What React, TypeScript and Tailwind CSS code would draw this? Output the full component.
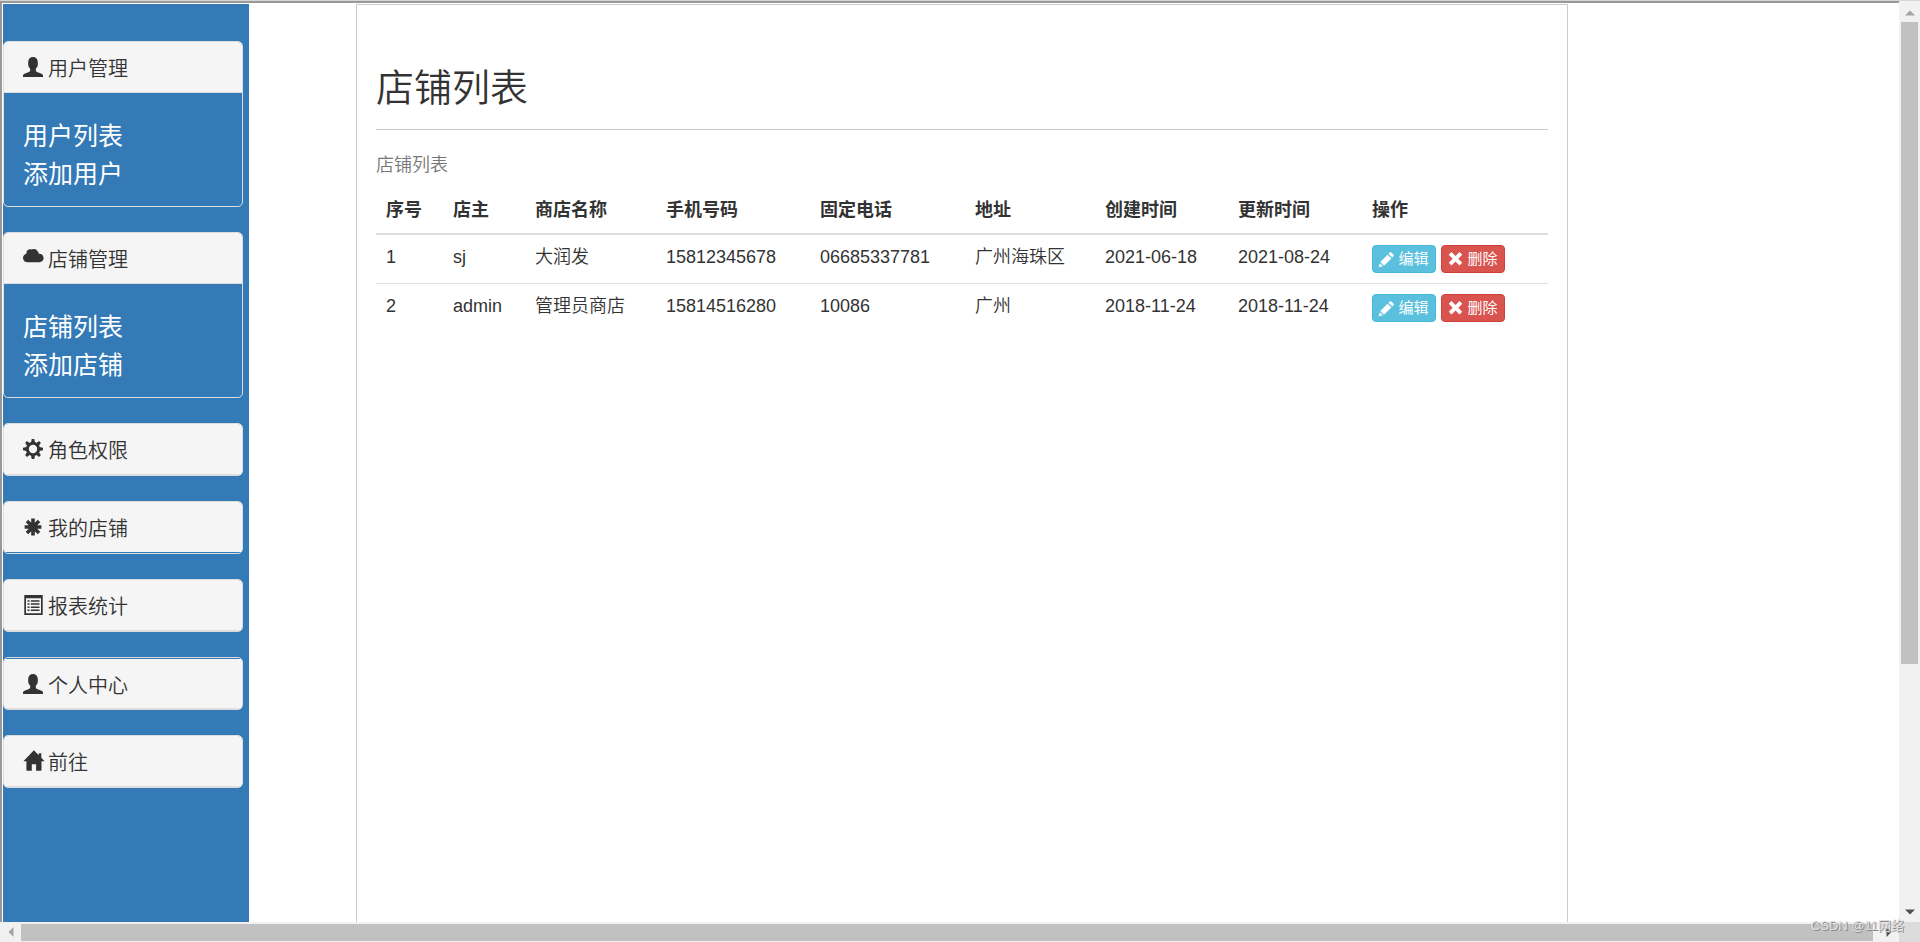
import type { ReactNode } from "react";

type IconName = "user" | "cloud" | "cog" | "asterisk" | "list" | "home" | "pencil" | "remove";

const icons: Record<IconName, ReactNode> = {
  user: (
    <path d="M10 0C7 0 5.2 2 5.2 5v2.5c0 1.800.9 3.200 2 4.200v1.500c0 .9-.5 1.300-1.300 1.700L1.500 16.800C.5 17.300 0 17.800 0 18.700V20h20v-1.300c0-.9-.5-1.400-1.500-1.900l-4.400-1.900c-.8-.4-1.300-.8-1.300-1.700v-1.500c1.100-1 2-2.400 2-4.200V5c0-3-1.800-5-4.800-5z" />
  ),
  cloud: (
    <path d="M4 14.200h12.500c2.200 0 4.100-1.700 4.100-4.100 0-2.300-1.800-4.300-4.200-4.300h-.5C15.300 3 13.400.9 10.800.9c-.9 0-1.700.2-2.300.6C5.700.7 3.500 2.500 3.400 5.200v.6C1.500 6.400 0 8 0 10.100c0 2.300 1.700 4.100 4 4.100z" />
  ),
  cog: (
    <>
      <circle cx="10" cy="10" r="5.700" fill="none" stroke="currentColor" strokeWidth="3" />
      <path d="M8 3.700 8.700 0h2.600l.7 3.700zM8 16.300l.7 3.700h2.600l.7-3.700zM3.700 8 0 8.700v2.600l3.700.7zM16.300 8l3.700.7v2.600l-3.700.7zM4.200 6.800 2.100 4l1.900-1.900 2.800 2.100zM15.800 6.800 17.900 4 16 2.100l-2.800 2.100zM4.200 13.200 2.100 16 4 17.900l2.800-2.100zM15.800 13.200l2.100 2.800-1.900 1.900-2.800-2.100z" />
    </>
  ),
  asterisk: (
    <path
      d="M10 1.600v16.800M1.600 10h16.800M4 4l12 12M16 4 4 16"
      fill="none"
      stroke="currentColor"
      strokeWidth="3.600"
    />
  ),
  list: (
    <>
      <path fillRule="evenodd" d="M1.300 0h18.400v20H1.300zM3 3.300v15h15v-15z" />
      <path d="M4.500 5.200h2v1.500h-2zM7.800 5.200h8.700v1.500H7.800zM4.500 8.300h2v1.500h-2zM7.800 8.300h8.700v1.500H7.800zM4.500 11.400h2v1.500h-2zM7.800 11.400h8.700v1.500H7.800zM4.500 14.500h2V16h-2zM7.800 14.500h8.700V16H7.800z" />
    </>
  ),
  home: (
    <path d="M10.900-.7.4 10.300h3V19c0 .5.300.8.800.8h4.600v-6.500h4.300v6.500h4.600c.5 0 .8-.3.800-.8v-8.700h3.100l-3.300-3.500V2.200h-2.500v2z" />
  ),
  pencil: (
    <path d="M14.300.7c.6-.6 1.600-.6 2.200 0l2.800 2.800c.6.600.6 1.600 0 2.200L17.600 7.400l-5-5zM11.500 3.500l5 5L6.300 18.700l-.4-2.100-2.100-.4-.4-2.200-2.100-.4zM.9 14.900l4.200 4.200L-.3 20.300z" />
  ),
  remove: (
    <path d="M4.700 0 1 3.700 6.300 9 1 14.300 4.700 18l5.300-5.300 5.300 5.300 3.700-3.700L13.700 9 19 3.700 15.300 0 10 5.300z" />
  ),
};

function Icon({ name, className }: { name: IconName; className: string }) {
  return (
    <svg viewBox="0 0 20 20" fill="currentColor" aria-hidden="true" className={`shrink-0 overflow-visible ${className}`}>
      {icons[name]}
    </svg>
  );
}

type Menu = { title: string; icon: IconName; links?: string[]; seam?: "top" | "bottom" };

const menus: Menu[] = [
  { title: "用户管理", icon: "user", links: ["用户列表", "添加用户"] },
  { title: "店铺管理", icon: "cloud", links: ["店铺列表", "添加店铺"] },
  { title: "角色权限", icon: "cog" },
  { title: "我的店铺", icon: "asterisk", seam: "bottom" },
  { title: "报表统计", icon: "list" },
  { title: "个人中心", icon: "user", seam: "top" },
  { title: "前往", icon: "home" },
];

const seams = {
  none: "border-b border-[#ddd]",
  top: "border-y border-t-[#337ab7] border-b-[#ddd]",
  bottom: "border-b border-[#337ab7]",
};

const columns = [
  { label: "序号", width: "w-[67px]" },
  { label: "店主", width: "w-[82px]" },
  { label: "商店名称", width: "w-[131px]" },
  { label: "手机号码", width: "w-[154px]" },
  { label: "固定电话", width: "w-[155px]" },
  { label: "地址", width: "w-[130px]" },
  { label: "创建时间", width: "w-[133px]" },
  { label: "更新时间", width: "w-[134px]" },
  { label: "操作", width: "" },
];

const shops = [
  ["1", "sj", "大润发", "15812345678", "06685337781", "广州海珠区", "2021-06-18", "2021-08-24"],
  ["2", "admin", "管理员商店", "15814516280", "10086", "广州", "2018-11-24", "2018-11-24"],
];

function Sidebar() {
  return (
    <nav className="w-[246px] shrink-0 bg-[#337ab7] pt-[37px] pr-[6px] overflow-hidden">
      <div className="flex flex-col gap-[25px]">
        {menus.map((menu) => (
          <section key={menu.title} className="rounded-[5px] border border-[#ddd] overflow-hidden">
            <a
              href="#"
              className={`flex h-[51px] items-center gap-[5px] bg-[#f5f5f5] pl-[19px] text-[20px] leading-6 font-[350] text-[#333] ${seams[menu.seam ?? "none"]}`}
            >
              <Icon name={menu.icon} className="size-5" />
              <span className="pt-1">{menu.title}</span>
            </a>
            {menu.links && (
              <ul className="pt-[24px] pb-[13px] pl-[19px] text-[25px] leading-[38px] text-white">
                {menu.links.map((link) => (
                  <li key={link}>
                    <a href="#">{link}</a>
                  </li>
                ))}
              </ul>
            )}
          </section>
        ))}
      </div>
    </nav>
  );
}

function ShopTable() {
  return (
    <table className="mt-[23px] w-full table-fixed border-separate border-spacing-0 text-left text-[18px] leading-[25px]">
      <caption className="caption-top pb-[10px] text-left font-[350] text-[#777]">店铺列表</caption>
      <thead>
        <tr>
          {columns.map((col) => (
            <th key={col.label} className={`border-b-2 border-[#ddd] p-[10px] font-bold ${col.width}`}>
              {col.label}
            </th>
          ))}
        </tr>
      </thead>
      <tbody>
        {shops.map((shop, i) => (
          <tr key={shop[0]} className="align-top">
            {shop.map((cell, j) => (
              <td key={j} className={`p-[10px] font-[350] whitespace-nowrap ${i > 0 ? "border-t border-[#ddd]" : ""}`}>
                {cell}
              </td>
            ))}
            <td className={`p-[10px] ${i > 0 ? "border-t border-[#ddd]" : ""}`}>
              <div className="flex gap-[5px] text-[15px] leading-[22px] text-white">
                <button className="flex h-7 w-16 items-center justify-center gap-1 rounded-[4px] border border-[#46b8da] bg-[#5bc0de]">
                  <Icon name="pencil" className="size-[15px]" />
                  编辑
                </button>
                <button className="flex h-7 w-16 items-center justify-center gap-1 rounded-[4px] border border-[#d43f3a] bg-[#d9534f]">
                  <Icon name="remove" className="size-[15px]" />
                  删除
                </button>
              </div>
            </td>
          </tr>
        ))}
      </tbody>
    </table>
  );
}

function Arrow({ d, color }: { d: string; color: string }) {
  return (
    <svg viewBox="0 0 10 10" className={`size-[10px] ${color}`} fill="currentColor" aria-hidden="true">
      <path d={d} />
    </svg>
  );
}

export default function App() {
  return (
    <div className="relative flex h-screen flex-col overflow-hidden border-t border-[#d6d6d6] bg-white font-['Liberation_Sans','Noto_Sans_CJK_SC',sans-serif] text-[#333]">
      <div className="flex min-h-0 flex-1">
        {/* frame */}
        <div className="flex min-w-0 flex-1 border-t-2 border-l-2 border-[#999] pt-px pl-px">
          <Sidebar />
          <main className="mr-[331px] ml-[107px] min-w-0 flex-1 border border-b-0 border-[#ccc] px-[19px] pt-[62px]">
            <h1 className="border-b border-[#ccc] pb-[20px] text-[38px] leading-[42px] font-[350]">店铺列表</h1>
            <ShopTable />
          </main>
        </div>
        {/* vertical scrollbar */}
        <div className="flex w-[21px] shrink-0 flex-col bg-[#f1f1f1] px-[2px]">
          <button aria-label="向上滚动" className="flex h-[21px] items-center justify-center pt-[3px]">
            <Arrow d="M0 7.500h10L5 2.500z" color="text-[#a3a3a3]" />
          </button>
          <div className="flex-1">
            <div className="h-[73%] bg-[#c1c1c1]" />
          </div>
          <button aria-label="向下滚动" className="flex h-[21px] items-center justify-center">
            <Arrow d="M0 2.500h10L5 7.500z" color="text-[#505050]" />
          </button>
        </div>
      </div>
      {/* horizontal scrollbar */}
      <div className="flex h-5 shrink-0 bg-[#f1f1f1]">
        <button aria-label="向左滚动" className="flex w-[21px] items-center justify-center">
          <Arrow d="M7.500 0v10L2.500 5z" color="text-[#a3a3a3]" />
        </button>
        <div className="mt-[2px] mr-[5px] mb-px flex-1 bg-[#c1c1c1]" />
        <button aria-label="向右滚动" className="flex w-[21px] items-center justify-center">
          <Arrow d="M2.500 0v10L7.500 5z" color="text-[#505050]" />
        </button>
        <div className="w-[21px] bg-[#dcdcdc]" />
      </div>
      <span className="absolute right-4 bottom-[7px] text-[13px] leading-[18px] text-[#e0e0e0] [text-shadow:1px_1px_0_#888]">
        CSDN @11网络
      </span>
    </div>
  );
}
